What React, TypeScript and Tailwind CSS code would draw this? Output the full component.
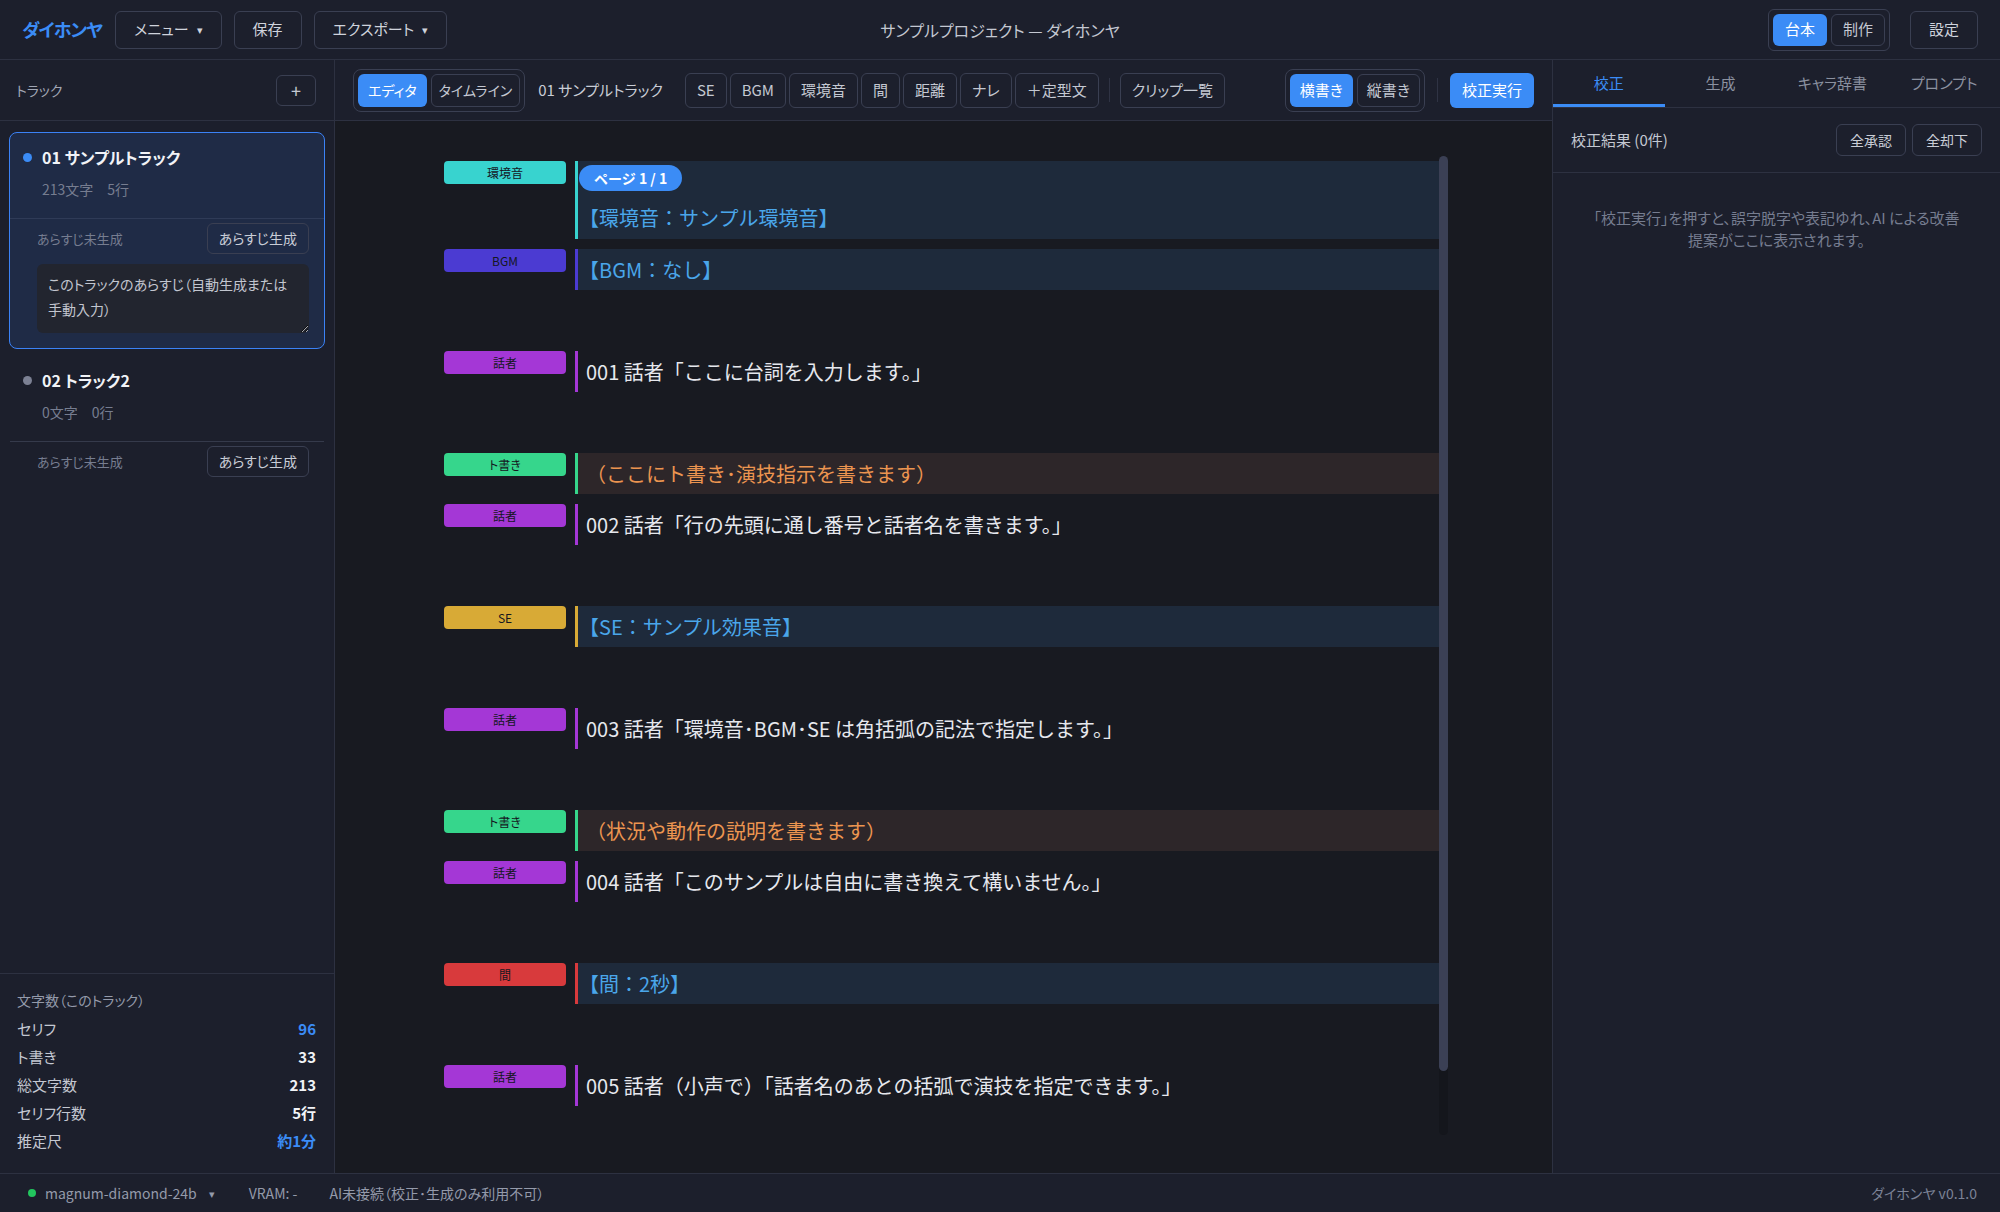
import React from "react";

type Kind = "env" | "bgm" | "speaker" | "direction" | "se" | "pause";

const KINDS: Record<Kind, { label: string; pill: string; bar: string; block: string; text: string; pad: string }> = {
  env: { label: "環境音", pill: "bg-[#38d3cf]", bar: "border-[#38d3cf]", block: "bg-[#1e2a3b]", text: "text-[#4aa6ea]", pad: "pl-[1px]" },
  bgm: { label: "BGM", pill: "bg-[#4b3bd2]", bar: "border-[#4b3bd2]", block: "bg-[#1e2a3b]", text: "text-[#4aa6ea]", pad: "pl-[1px]" },
  speaker: { label: "話者", pill: "bg-[#a437d6]", bar: "border-[#a437d6]", block: "", text: "text-[#e6e8ee]", pad: "pl-[8px]" },
  direction: { label: "ト書き", pill: "bg-[#36d68c]", bar: "border-[#36d68c]", block: "bg-[#2d2629]", text: "text-[#ec9550]", pad: "pl-[8px]" },
  se: { label: "SE", pill: "bg-[#d8aa36]", bar: "border-[#d8aa36]", block: "bg-[#1e2a3b]", text: "text-[#4aa6ea]", pad: "pl-[1px]" },
  pause: { label: "間", pill: "bg-[#d83a3c]", bar: "border-[#d83a3c]", block: "bg-[#1e2a3b]", text: "text-[#4aa6ea]", pad: "pl-[1px]" },
};

type Line = { kind: Kind; text: string; badge?: boolean } | null;

const LINES: Line[] = [
  { kind: "env", text: "【環境音：サンプル環境音】", badge: true },
  { kind: "bgm", text: "【BGM：なし】" },
  null,
  { kind: "speaker", text: "001 話者「ここに台詞を入力します。」" },
  null,
  { kind: "direction", text: "（ここにト書き･演技指示を書きます）" },
  { kind: "speaker", text: "002 話者「行の先頭に通し番号と話者名を書きます。」" },
  null,
  { kind: "se", text: "【SE：サンプル効果音】" },
  null,
  { kind: "speaker", text: "003 話者「環境音･BGM･SE は角括弧の記法で指定します。」" },
  null,
  { kind: "direction", text: "（状況や動作の説明を書きます）" },
  { kind: "speaker", text: "004 話者「このサンプルは自由に書き換えて構いません。」" },
  null,
  { kind: "pause", text: "【間：2秒】" },
  null,
  { kind: "speaker", text: "005 話者（小声で）「話者名のあとの括弧で演技を指定できます。」" },
];

const btn =
  "h-[38px] px-[18px] rounded-md border border-[#3a3f52] text-[15px] text-[#cfd3dc] flex items-center gap-[8px]";
const tbtn =
  "h-[35px] px-[11px] rounded-md border border-[#3a3f52] text-[15px] text-[#c4c8d2] flex items-center";

function Header() {
  return (
    <header className="h-[60px] shrink-0 grid grid-cols-[1fr_auto_1fr] items-center border-b border-[#2d3141] bg-[#1c1f2c] px-[22px]">
      <div className="flex items-center gap-[12px]">
        <span className="text-[18px] tracking-[-1px] font-bold text-[#3b8cf6] mr-[1px]">ダイホンヤ</span>
        <button className={btn}>
          メニュー <span className="text-[11px]">▾</span>
        </button>
        <button className={btn}>保存</button>
        <button className={btn}>
          エクスポート <span className="text-[11px]">▾</span>
        </button>
      </div>
      <div className="text-[16px] text-[#c4c8d2]">サンプルプロジェクト — ダイホンヤ</div>
      <div className="flex items-center justify-end gap-[20px]">
        <div className="flex items-center gap-[4px] rounded-md border border-[#3a3f52] p-[4px]">
          <button className="h-[32px] px-[12px] rounded-md bg-[#3b8cf6] text-white text-[15px]">台本</button>
          <button className="h-[32px] px-[11px] rounded-md border border-[#3a3f52] text-[#c4c8d2] text-[15px]">制作</button>
        </div>
        <button className={btn}>設定</button>
      </div>
    </header>
  );
}

function TrackItem({
  active,
  title,
  meta,
}: {
  active?: boolean;
  title: string;
  meta: string;
}) {
  return (
    <div
      className={
        active
          ? "rounded-lg border border-[#3b82f6] bg-[#1f2b46]"
          : "rounded-lg border border-transparent"
      }
    >
      <div className="pl-[13px] pt-[12px] pb-[18px]">
        <div className="flex items-center gap-[10px]">
          <span className={`w-[9px] h-[9px] rounded-full ${active ? "bg-[#3b8cf6]" : "bg-[#7c8194]"}`} />
          <span className="text-[16px] font-bold text-[#f1f3f7]">{title}</span>
        </div>
        <div className="pl-[19px] mt-[10px] text-[14px] text-[#767d90]">{meta}</div>
      </div>
      <div className={`border-t ${active ? "border-[#2f3b57]" : "border-[#353a4b]"} pl-[27px] pr-[15px] pt-[4px] pb-[15px]`}>
        <div className="flex items-center justify-between">
          <span className="text-[13px] text-[#767d90]">あらすじ未生成</span>
          <button className="h-[31px] px-[11px] rounded-md border border-[#3a3f52] text-[14px] text-[#c9cdd6]">
            あらすじ生成
          </button>
        </div>
        {active && (
          <textarea
            className="mt-[10px] block w-full h-[69px] rounded-md bg-[#22252f] px-[11px] py-[8px] text-[14px] leading-[25px] text-[#cfd3dc] placeholder:text-[#c2c6cf] outline-none"
            placeholder="このトラックのあらすじ（自動生成または手動入力）"
          />
        )}
      </div>
    </div>
  );
}

function StatRow({ label, value, tone }: { label: string; value: string; tone: string }) {
  return (
    <div className="flex items-center justify-between h-[28px]">
      <span className="text-[15px] text-[#c4c8d2]">{label}</span>
      <span className={`text-[15px] font-bold ${tone}`}>{value}</span>
    </div>
  );
}

function Sidebar() {
  return (
    <aside className="w-[335px] shrink-0 flex flex-col border-r border-[#2d3141] bg-[#1c1f2c]">
      <div className="h-[61px] shrink-0 flex items-center justify-between border-b border-[#2d3141] pl-[16px] pr-[18px]">
        <span className="text-[14px] text-[#a0a6b4]">トラック</span>
        <button className="w-[40px] h-[31px] rounded-md border border-[#3a3f52] text-[18px] text-[#c4c8d2] flex items-center justify-center">
          +
        </button>
      </div>
      <div className="flex-1 flex flex-col gap-[6px] px-[9px] pt-[11px]">
        <TrackItem active title="01 サンプルトラック" meta="213文字　5行" />
        <TrackItem title="02 トラック2" meta="0文字　0行" />
      </div>
      <div className="border-t border-[#2d3141] pl-[17px] pr-[18px] pt-[16px] pb-[18px]">
        <div className="text-[14px] text-[#949aaa] mb-[4px]">文字数（このトラック）</div>
        <StatRow label="セリフ" value="96" tone="text-[#3b8cf6]" />
        <StatRow label="ト書き" value="33" tone="text-[#f1f3f7]" />
        <StatRow label="総文字数" value="213" tone="text-[#f1f3f7]" />
        <StatRow label="セリフ行数" value="5行" tone="text-[#f1f3f7]" />
        <StatRow label="推定尺" value="約1分" tone="text-[#3b8cf6]" />
      </div>
    </aside>
  );
}

function Toolbar() {
  return (
    <div className="h-[61px] shrink-0 flex items-center border-b border-[#2d3141] bg-[#1c1f2c] pl-[18px] pr-[18px]">
      <div className="flex items-center gap-[4px] rounded-lg border border-[#3a3f52] p-[4px]">
        <button className="h-[33px] px-[10px] rounded-md bg-[#3b8cf6] text-white text-[14px]">エディタ</button>
        <button className="h-[33px] px-[7px] rounded-md border border-[#3a3f52] text-[#c4c8d2] text-[14px]">タイムライン</button>
      </div>
      <span className="ml-[13px] text-[15px] text-[#c9cdd6]">01 サンプルトラック</span>
      <div className="ml-[22px] flex items-center gap-[3px]">
        <button className={tbtn}>SE</button>
        <button className={tbtn}>BGM</button>
        <button className={tbtn}>環境音</button>
        <button className={tbtn}>間</button>
        <button className={tbtn}>距離</button>
        <button className={tbtn}>ナレ</button>
        <button className={tbtn}>＋定型文</button>
        <span className="mx-[7px] w-px h-[24px] bg-[#2f3344]" />
        <button className={tbtn}>クリップ一覧</button>
      </div>
      <div className="ml-auto flex items-center">
        <div className="flex items-center gap-[4px] rounded-lg border border-[#3a3f52] p-[4px]">
          <button className="h-[33px] px-[10px] rounded-md bg-[#3b8cf6] text-white text-[15px]">横書き</button>
          <button className="h-[33px] px-[9px] rounded-md border border-[#3a3f52] text-[#c4c8d2] text-[15px]">縦書き</button>
        </div>
        <span className="mx-[12px] w-px h-[24px] bg-[#2f3344]" />
        <button className="h-[35px] px-[12px] rounded-md bg-[#3b8cf6] text-white text-[15px]">校正実行</button>
      </div>
    </div>
  );
}

function ScriptLine({ line }: { line: Line }) {
  if (!line) return <div className="h-[41px]" />;
  const k = KINDS[line.kind];
  return (
    <div className="flex items-start gap-[9px]">
      <div
        className={`w-[122px] h-[23px] shrink-0 rounded-[4px] ${k.pill} flex items-center justify-center text-[12px] text-[#15171f]`}
      >
        {k.label}
      </div>
      <div className={`flex-1 border-l-[3px] ${k.bar} ${k.block} [font-feature-settings:normal]`}>
        {line.badge ? (
          <div className="flex flex-col items-start">
            <span className="mt-[4px] ml-[1px] h-[26px] px-[15px] rounded-full bg-[#3b8cf6] text-white text-[14px] font-bold flex items-center">
              ページ 1 / 1
            </span>
            <div className={`h-[48px] pt-[6px] flex items-center ${k.pad} text-[20px] ${k.text}`}>{line.text}</div>
          </div>
        ) : (
          <div className={`h-[41px] flex items-center ${k.pad} text-[20px] ${k.text}`}>{line.text}</div>
        )}
      </div>
    </div>
  );
}

function Editor() {
  return (
    <div className="flex-1 bg-[#181a21] overflow-hidden pl-[109px] pr-[104px] pt-[35px]">
      <div className="flex">
        <div className="flex-1 flex flex-col gap-[10px] pt-[5px]">
          {LINES.map((l, i) => (
            <ScriptLine key={i} line={l} />
          ))}
        </div>
        <div className="w-[9px] h-[979px] rounded-full bg-[#14161c]">
          <div className="h-[915px] rounded-full bg-[#3b4055]" />
        </div>
      </div>
    </div>
  );
}

function RightPanel() {
  const tabs = ["校正", "生成", "キャラ辞書", "プロンプト"];
  return (
    <aside className="w-[448px] shrink-0 flex flex-col border-l border-[#2d3141] bg-[#1c1f2c]">
      <div className="h-[48px] shrink-0 grid grid-cols-4 border-b border-[#2d3141]">
        {tabs.map((t, i) => (
          <div
            key={t}
            className={
              i === 0
                ? "flex items-center justify-center text-[15px] text-[#3b8cf6] border-b-[3px] border-[#3b8cf6] pt-[3px]"
                : "flex items-center justify-center text-[15px] text-[#8b91a0]"
            }
          >
            {t}
          </div>
        ))}
      </div>
      <div className="h-[65px] shrink-0 flex items-center justify-between border-b border-[#2d3141] pl-[18px] pr-[18px]">
        <span className="text-[15px] text-[#c4c8d2]">校正結果 (0件)</span>
        <div className="flex gap-[6px]">
          <button className="h-[32px] px-[13px] rounded-md border border-[#3a3f52] text-[14px] text-[#c9cdd6]">全承認</button>
          <button className="h-[32px] px-[13px] rounded-md border border-[#3a3f52] text-[14px] text-[#c9cdd6]">全却下</button>
        </div>
      </div>
      <p className="pt-[34px] px-[16px] text-center text-[15px] leading-[22px] text-[#767d90]">
        「校正実行」を押すと、誤字脱字や表記ゆれ、AI による改善
        <br />
        提案がここに表示されます。
      </p>
    </aside>
  );
}

function Footer() {
  return (
    <footer className="h-[39px] shrink-0 flex items-center border-t border-[#2d3141] bg-[#1c1f2c] pl-[28px] pr-[23px] text-[14px] text-[#949aaa]">
      <span className="w-[8px] h-[8px] rounded-full bg-[#22c55e]" />
      <span className="ml-[9px]">magnum-diamond-24b</span>
      <span className="ml-[12px] text-[11px]">▾</span>
      <span className="ml-[34px]">VRAM: -</span>
      <span className="ml-[32px]">AI未接続（校正･生成のみ利用不可）</span>
      <span className="ml-auto text-[#7b8296]">ダイホンヤ v0.1.0</span>
    </footer>
  );
}

export default function App() {
  return (
    <div className="w-full h-[1212px] flex flex-col bg-[#1c1f2c] font-['Noto_Sans_CJK_JP','Noto_Sans',sans-serif] [font-feature-settings:'palt'] overflow-hidden">
      <Header />
      <div className="flex-1 flex min-h-0">
        <Sidebar />
        <main className="flex-1 min-w-0 flex flex-col">
          <Toolbar />
          <Editor />
        </main>
        <RightPanel />
      </div>
      <Footer />
    </div>
  );
}
